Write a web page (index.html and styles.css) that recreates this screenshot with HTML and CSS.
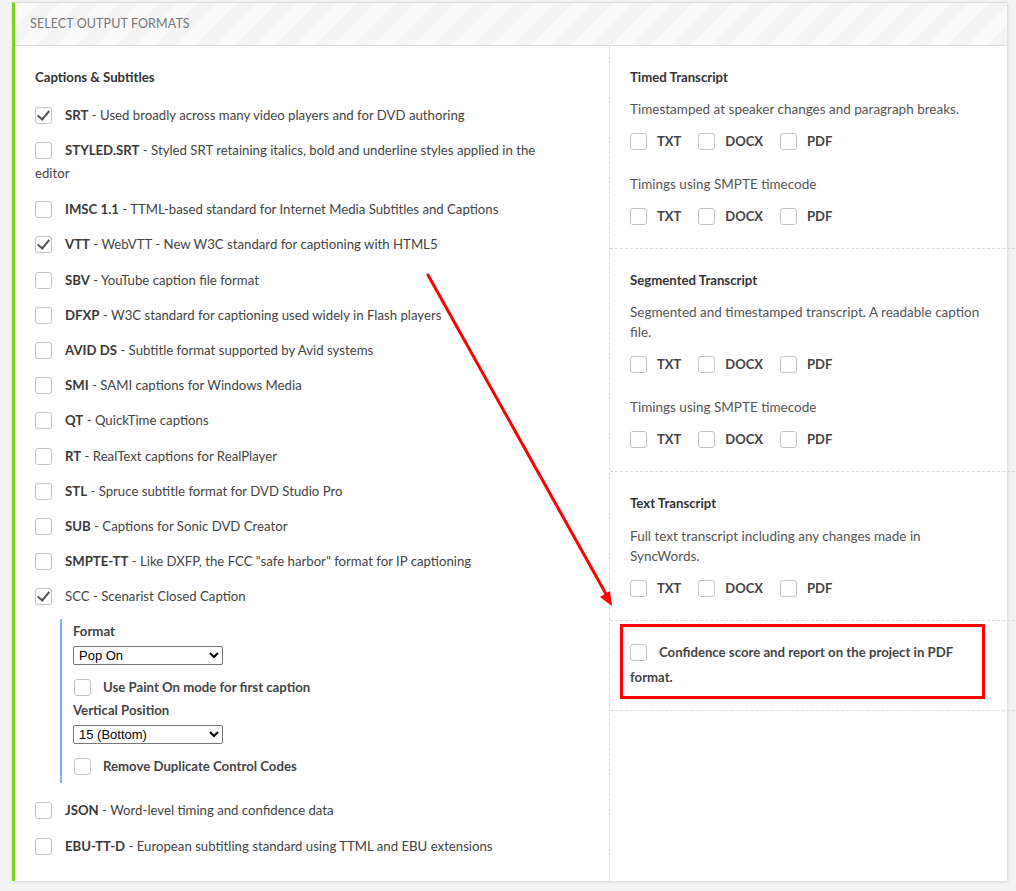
FILE: index.html
```html
<!DOCTYPE html>
<html>
<head>
<meta charset="utf-8">
<link rel="stylesheet" href="styles.css">
</head>
<body>
<div class="panel">
  <div class="panel-head">SELECT OUTPUT FORMATS</div>
  <div class="panel-body">
    <div class="col-left">
      <div class="group-title">Captions &amp; Subtitles</div>
      <div class="item"><span class="cb checked"></span><b>SRT</b> - Used broadly across many video players and for DVD authoring</div>
      <div class="item"><span class="cb"></span><b>STYLED.SRT</b> - Styled SRT retaining italics, bold and underline styles applied in the editor</div>
      <div class="item"><span class="cb"></span><b>IMSC 1.1</b> - TTML-based standard for Internet Media Subtitles and Captions</div>
      <div class="item"><span class="cb checked"></span><b>VTT</b> - WebVTT - New W3C standard for captioning with HTML5</div>
      <div class="item"><span class="cb"></span><b>SBV</b> - YouTube caption file format</div>
      <div class="item"><span class="cb"></span><b>DFXP</b> - W3C standard for captioning used widely in Flash players</div>
      <div class="item"><span class="cb"></span><b>AVID DS</b> - Subtitle format supported by Avid systems</div>
      <div class="item"><span class="cb"></span><b>SMI</b> - SAMI captions for Windows Media</div>
      <div class="item"><span class="cb"></span><b>QT</b> - QuickTime captions</div>
      <div class="item"><span class="cb"></span><b>RT</b> - RealText captions for RealPlayer</div>
      <div class="item"><span class="cb"></span><b>STL</b> - Spruce subtitle format for DVD Studio Pro</div>
      <div class="item"><span class="cb"></span><b>SUB</b> - Captions for Sonic DVD Creator</div>
      <div class="item"><span class="cb"></span><b>SMPTE-TT</b> - Like DXFP, the FCC "safe harbor" format for IP captioning</div>
      <div class="item"><span class="cb checked"></span>SCC - Scenarist Closed Caption</div>
      <div class="sub">
        <div class="sub-label">Format</div>
        <select class="sel"><option>Pop On</option></select>
        <div class="sub-opt"><span class="cb"></span>Use Paint On mode for first caption</div>
        <div class="sub-label">Vertical Position</div>
        <select class="sel"><option>15 (Bottom)</option></select>
        <div class="sub-opt"><span class="cb"></span>Remove Duplicate Control Codes</div>
      </div>
      <div class="item"><span class="cb"></span><b>JSON</b> - Word-level timing and confidence data</div>
      <div class="item"><span class="cb"></span><b>EBU-TT-D</b> - European subtitling standard using TTML and EBU extensions</div>
    </div>
    <div class="col-right">
      <div class="section">
        <div class="sec-title">Timed Transcript</div>
        <div class="sec-desc">Timestamped at speaker changes and paragraph breaks.</div>
        <div class="opts"><span class="opt"><span class="cb"></span>TXT</span><span class="opt"><span class="cb"></span>DOCX</span><span class="opt"><span class="cb"></span>PDF</span></div>
        <div class="sec-desc gap">Timings using SMPTE timecode</div>
        <div class="opts"><span class="opt"><span class="cb"></span>TXT</span><span class="opt"><span class="cb"></span>DOCX</span><span class="opt"><span class="cb"></span>PDF</span></div>
      </div>
      <div class="section">
        <div class="sec-title">Segmented Transcript</div>
        <div class="sec-desc">Segmented and timestamped transcript. A readable caption file.</div>
        <div class="opts"><span class="opt"><span class="cb"></span>TXT</span><span class="opt"><span class="cb"></span>DOCX</span><span class="opt"><span class="cb"></span>PDF</span></div>
        <div class="sec-desc gap">Timings using SMPTE timecode</div>
        <div class="opts"><span class="opt"><span class="cb"></span>TXT</span><span class="opt"><span class="cb"></span>DOCX</span><span class="opt"><span class="cb"></span>PDF</span></div>
      </div>
      <div class="section">
        <div class="sec-title">Text Transcript</div>
        <div class="sec-desc">Full text transcript including any changes made in SyncWords.</div>
        <div class="opts"><span class="opt"><span class="cb"></span>TXT</span><span class="opt"><span class="cb"></span>DOCX</span><span class="opt"><span class="cb"></span>PDF</span></div>
      </div>
      <div class="section section-conf">
        <div class="highlight"><span class="cb"></span>Confidence score and report on the project in PDF format.</div>
      </div>
    </div>
  </div>
</div>
<svg class="arrow" width="1016" height="891" viewBox="0 0 1016 891">
  <line x1="428" y1="275" x2="606" y2="594" stroke="#ff0000" stroke-width="3" stroke-linecap="round"/>
  <polygon points="612,606 600,597 610,591" fill="#ff0000"/>
</svg>
</body>
</html>
```
FILE: styles.css
```css
html, body {
  margin: 0;
  padding: 0;
}
body {
  background: #f3f3f3;
  font-family: Lato, "Open Sans", sans-serif;
  font-size: 13.2px;
  color: #444;
  width: 1016px;
  height: 891px;
  overflow: hidden;
  position: relative;
}
.panel {
  margin: 2px 0 0 12px;
  width: 995px;
  background: #fff;
  border-left: 3px solid #7ed321;
  border-top: 1px solid #dcdcdc;
  box-shadow: 1px 1px 3px rgba(0,0,0,0.12);
  box-sizing: border-box;
}
.panel-head {
  height: 42px;
  line-height: 42px;
  padding-left: 15px;
  font-size: 12.5px;
  color: #777;
  letter-spacing: 0.1px;
  border-bottom: 1px solid #dedede;
  background: repeating-linear-gradient(-45deg, #f4f4f4 0, #f4f4f4 14px, #fafafa 14px, #fafafa 28px);
}
.panel-body {
  display: grid;
  grid-template-columns: 594px 1fr;
}
.col-left {
  padding: 20px 45px 23px 20px;
}
.col-right {
  border-left: 1px dashed #dadada;
}
b { font-weight: 700; color: #3a3a3a; }
.group-title {
  font-weight: 700;
  line-height: 23px;
  color: #333;
  margin-bottom: 15px;
}
.item {
  line-height: 23px;
  margin-bottom: 12.2px;
  color: #444;
}
.item:nth-child(3) { margin-bottom: 13px; }
.item:last-child { margin-bottom: 0; }
.cb {
  display: inline-block;
  width: 15px;
  height: 15px;
  border: 1px solid #c4c4c4;
  border-radius: 3px;
  vertical-align: -4px;
  margin-right: 13px;
  background: #fff;
  position: relative;
}
.cb.checked::after {
  content: "";
  position: absolute;
  left: 4px;
  top: 0px;
  width: 5px;
  height: 10px;
  border-right: 2px solid #555;
  border-bottom: 2px solid #555;
  transform: rotate(40deg);
}
.sub {
  margin: -1px 0 16px 25px;
  border-left: 2px solid #7fb2f0;
  padding: 1px 0 5px 11px;
}
.sub-label {
  font-weight: 700;
  line-height: 23px;
  color: #444;
}
.sel {
  display: block;
  width: 150px;
  height: 19px;
  margin: 3px 0 0 0;
  font-family: "Liberation Sans", Arial, sans-serif;
  font-size: 13px;
  color: #000;
  border: 1px solid #767676;
  border-radius: 2px;
  background: #fff;
  padding: 0 0 0 1px;
}
.sub-opt {
  line-height: 23px;
  margin-top: 11px;
  font-weight: 700;
  color: #444;
}
.sub-opt .cb { margin-left: 1px; margin-right: 12px; }
.section {
  border-bottom: 1px dashed #dadada;
  padding: 20px 25px 20px 20px;
}
.sec-title {
  font-weight: 700;
  line-height: 23px;
  color: #333;
  margin-bottom: 10px;
}
.section:nth-child(3) .sec-title { margin-bottom: 11px; }
.sec-desc {
  font-size: 13.5px;
  line-height: 20px;
  color: #555;
  margin-bottom: 11px;
}
.sec-desc.gap { margin-top: 21px; }
.opts {
  line-height: 23px;
  font-weight: 700;
  font-size: 13px;
  color: #444;
}
.opt { margin-right: 17px; }
.opt .cb { margin-right: 10px; }
.section-conf {
  padding: 3px 30px 11px 10px;
}
.highlight {
  width: 352px;
  border: 3px solid #ff0000;
  padding: 13px 0 6px 7px;
  line-height: 25px;
  font-weight: 700;
  color: #444;
}
.highlight .cb { margin-right: 12px; }
.arrow {
  position: absolute;
  left: 0;
  top: 0;
  pointer-events: none;
}
```
